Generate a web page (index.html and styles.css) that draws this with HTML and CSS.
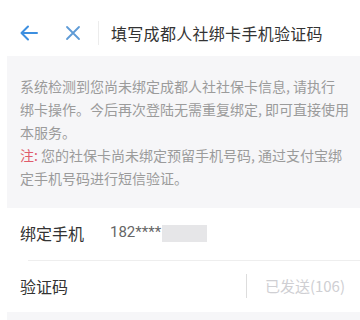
FILE: index.html
```html
<!DOCTYPE html>
<html lang="zh-CN">
<head>
    <meta charset="UTF-8" />
    <meta name="viewport" content="width=device-width, initial-scale=1.0"/>
    <title>填写成都人社绑卡手机验证码</title>
    <link rel="stylesheet" href="styles.css">
</head>
<body>
<header class="topbar">
    <span class="icon back">
        <svg width="18" height="16" viewBox="0 0 18 16"><path d="M17 8H2M8 1.5L1.5 8 8 14.5" fill="none" stroke="#3d8fe0" stroke-width="2" stroke-linecap="round" stroke-linejoin="round"/></svg>
    </span>
    <span class="icon close">
        <svg width="16" height="16" viewBox="0 0 16 16"><path d="M2 2L14 14M14 2L2 14" fill="none" stroke="#5e9bd6" stroke-width="1.8" stroke-linecap="round"/></svg>
    </span>
    <span class="sep"></span>
    <h1>填写成都人社绑卡手机验证码</h1>
</header>

<div class="notice">
    <p>系统检测到您尚未绑定成都人社社保卡信息, 请执行<br>绑卡操作。今后再次登陆无需重复绑定, 即可直接使用<br>本服务。</p>
    <p><span class="warn">注:</span> 您的社保卡尚未绑定预留手机号码, 通过支付宝绑<br>定手机号码进行短信验证。</p>
</div>

<div class="form">
    <div class="row">
        <span class="label">绑定手机</span>
        <span class="phone">182****</span>
        <span class="blur"></span>
    </div>
    <div class="row">
        <span class="label">验证码</span>
        <span class="code-sep"></span>
        <span class="sent">已发送(106)</span>
    </div>
</div>
<div class="footer-gap"></div>
</body>
</html>
```

FILE: styles.css
```css
body {
  margin: 0;
  font-family: "Noto Sans CJK SC", "Noto Sans", sans-serif;
  background: #fff;
  color: #333;
}

.topbar {
  display: flex;
  align-items: center;
  height: 46px;
  padding: 10px 0 0 20px;
  background: #fff;
}

.icon {
  display: flex;
  align-items: center;
}

.close {
  margin-left: 27px;
}

.sep {
  width: 1px;
  height: 24px;
  background: #ececec;
  margin-left: 17px;
}

.topbar h1 {
  margin: 0 0 0 12px;
  font-size: 16px;
  font-weight: normal;
  color: #333;
  letter-spacing: 0.3px;
}

.notice {
  margin-left: 7px;
  background: #f6f6f8;
  padding: 19px 0 18px 13px;
  font-size: 14px;
  line-height: 23px;
  color: #9b9b9b;
  white-space: nowrap;
  overflow: hidden;
}

.notice p {
  margin: 0;
}

.warn {
  color: #e05c6c;
}

.form {
  padding-left: 20px;
}

.row {
  display: flex;
  align-items: center;
  height: 52px;
  font-size: 16px;
}

.row + .row {
  border-top: 1px solid #eee;
  margin-left: 8px;
  height: 51px;
}

.row + .row .label {
  margin-left: -8px;
}

.label {
  color: #333;
  width: 90px;
  margin-top: -2px;
}

.phone {
  color: #666;
  font-size: 15px;
  font-family: "Roboto", "Noto Sans", sans-serif;
  margin-top: -4px;
}

.blur {
  width: 45px;
  height: 17px;
  background: #e6e6e8;
  margin-left: 1px;
  margin-top: -2px;
}

.code-sep {
  width: 1px;
  height: 24px;
  background: #ddd;
  margin-left: auto;
  margin-top: -2px;
}

.sent {
  font-size: 15px;
  color: #cfcfd3;
  margin: -2px 15px 0 18px;
}

.footer-gap {
  margin-left: 7px;
  height: 8px;
  background: #f6f6f8;
}
```
